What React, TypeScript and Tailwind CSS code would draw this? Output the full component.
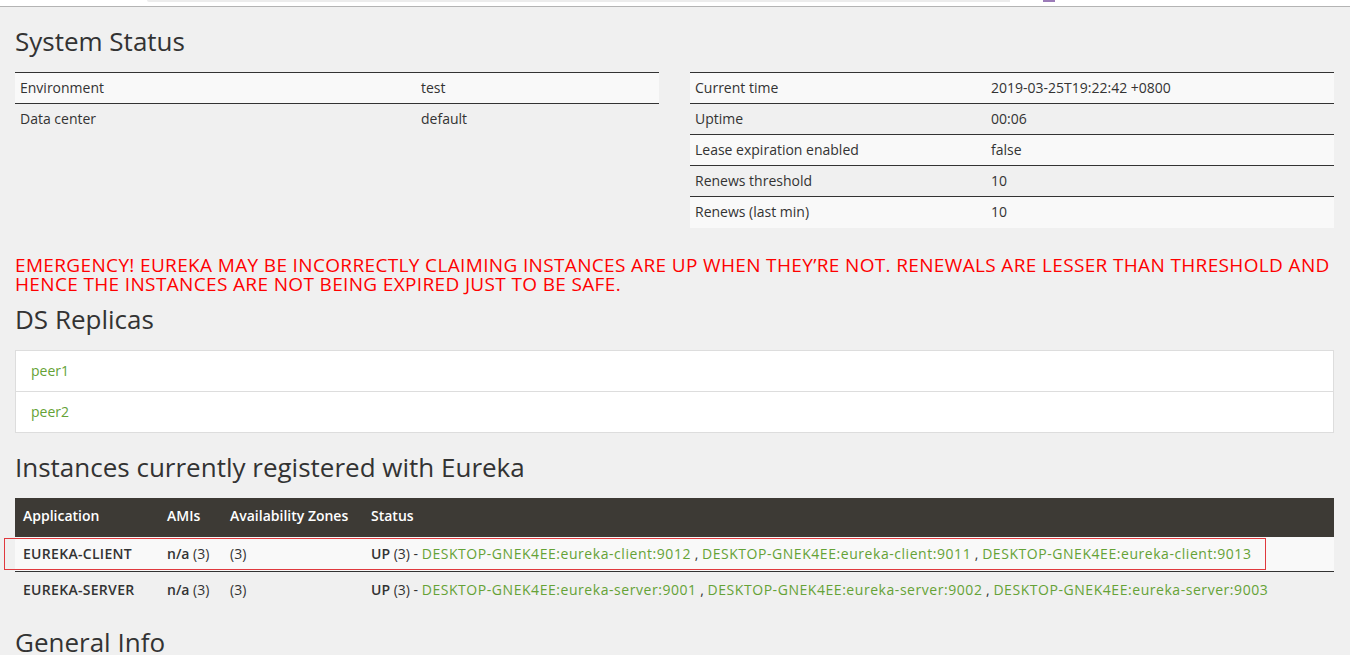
import React from 'react';

const statusLeft = [
  ['Environment', 'test'],
  ['Data center', 'default'],
];

const statusRight = [
  ['Current time', '2019-03-25T19:22:42 +0800'],
  ['Uptime', '00:06'],
  ['Lease expiration enabled', 'false'],
  ['Renews threshold', '10'],
  ['Renews (last min)', '10'],
];

const replicas = ['peer1', 'peer2'];

const apps = [
  {
    name: 'EUREKA-CLIENT',
    instances: [
      'DESKTOP-GNEK4EE:eureka-client:9012',
      'DESKTOP-GNEK4EE:eureka-client:9011',
      'DESKTOP-GNEK4EE:eureka-client:9013',
    ],
  },
  {
    name: 'EUREKA-SERVER',
    instances: [
      'DESKTOP-GNEK4EE:eureka-server:9001',
      'DESKTOP-GNEK4EE:eureka-server:9002',
      'DESKTOP-GNEK4EE:eureka-server:9003',
    ],
  },
];

const StatusTable = ({
  rows,
  keyWidth,
}: {
  rows: string[][];
  keyWidth: string;
}) => (
  <table className="w-full border-collapse text-[14px]">
    <tbody>
      {rows.map(([label, value], i) => (
        <tr
          key={label}
          className={`h-[31px] border-t border-[#333] ${i % 2 === 0 ? 'bg-[#f9f9f9]' : ''}`}
        >
          <td className={`${keyWidth} px-[5px] pt-0 pb-[2px] align-middle`}>{label}</td>
          <td className="px-[5px] pt-0 pb-[2px] align-middle">{value}</td>
        </tr>
      ))}
    </tbody>
  </table>
);

const Heading = ({ children, className }: { children: React.ReactNode; className: string }) => (
  <h2 className={`text-[26px] font-medium leading-[30px] text-[#333] ${className}`}>{children}</h2>
);

export default function App() {
  return (
    <div className="relative min-h-screen bg-[#f0f0f0] font-['Open_Sans',sans-serif] text-[#333]">
      {/* browser chrome remnant */}
      <div className="flex h-[6px] items-start bg-white">
        <div className="ml-[147px] h-[2px] w-[863px] rounded-bl-[6px] bg-[#ececec]" />
        <div className="ml-[33px] h-[2px] w-[12px] bg-[#9b7bb8]" />
      </div>
      <div className="border-t border-[#b4b4b4]" />

      <div className="px-[15px] pr-[16px]">
        <Heading className="mt-[19px]">System Status</Heading>

        <div className="mt-[16px] grid grid-cols-2 items-start gap-[31px]">
          <StatusTable rows={statusLeft} keyWidth="w-[401px]" />
          <StatusTable rows={statusRight} keyWidth="w-[296px]" />
        </div>

        <p className="mt-[28px] text-[19px] uppercase leading-[19px] tracking-[0.35px] text-[#ff0000]">
          Emergency! Eureka may be incorrectly claiming instances are up when they’re not.
          Renewals are lesser than threshold and hence the instances are not being expired just
          to be safe.
        </p>

        <Heading className="mt-[10px]">DS Replicas</Heading>

        <ul className="mt-[16px] border border-[#dddddd] bg-white text-[14px]">
          {replicas.map((r, i) => (
            <li
              key={r}
              className={`box-content flex h-[40px] items-center px-[15px] ${i > 0 ? 'border-t border-[#dddddd]' : ''}`}
            >
              <a className="text-[#65a236]">{r}</a>
            </li>
          ))}
        </ul>

        <Heading className="mt-[19px]">Instances currently registered with Eureka</Heading>

        <table className="mt-[16px] w-full border-collapse text-[14px]">
          <thead>
            <tr className="h-[39px] bg-[#3d3a35] text-left text-white">
              <th className="w-[144px] px-[8px] pb-[3px] font-semibold">Application</th>
              <th className="w-[63px] px-[8px] pb-[3px] font-semibold">AMIs</th>
              <th className="w-[141px] px-[8px] pb-[3px] font-semibold">Availability Zones</th>
              <th className="px-[8px] pb-[3px] font-semibold">Status</th>
            </tr>
          </thead>
          <tbody>
            {apps.map((app, i) => (
              <tr
                key={app.name}
                className={`${i === 0 ? 'h-[35px] bg-[#f9f9f9]' : 'h-[36px] border-t border-[#333]'}`}
              >
                <td className="px-[8px] font-semibold tracking-[0.3px]">{app.name}</td>
                <td className="px-[8px]">
                  <b className="font-semibold">n/a</b> (3)
                </td>
                <td className="px-[8px]">(3)</td>
                <td className="px-[8px]">
                  <b className="font-semibold">UP</b> (3) -{' '}
                  {app.instances.map((inst, j) => (
                    <React.Fragment key={inst}>
                      <a className="tracking-[0.55px] text-[#65a236]">{inst}</a>
                      {j < app.instances.length - 1 ? ' , ' : ''}
                    </React.Fragment>
                  ))}
                </td>
              </tr>
            ))}
          </tbody>
        </table>

        <Heading className="mt-[19px]">General Info</Heading>
        <div className="h-[40px]" />
      </div>

      {/* annotation box */}
      <div className="pointer-events-none absolute left-[4px] top-[538px] h-[32px] w-[1262px] border border-[#e0393e]" />
    </div>
  );
}
